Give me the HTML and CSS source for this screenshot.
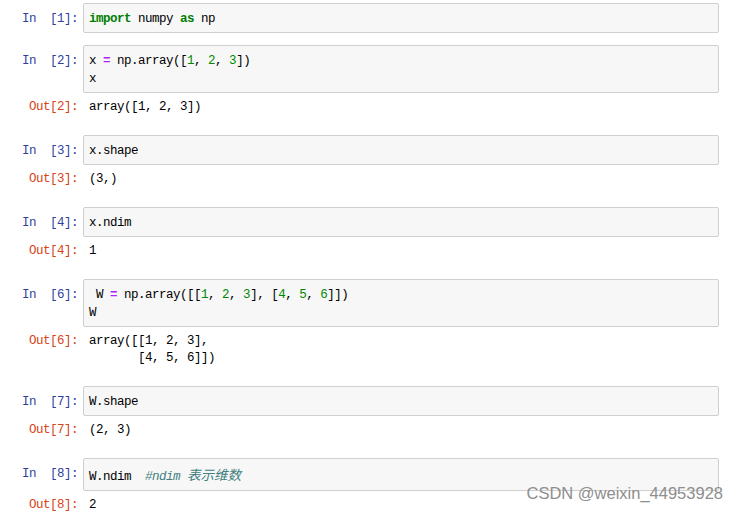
FILE: index.html
```html
<!DOCTYPE html>
<html>
<head>
<meta charset="utf-8">
<link rel="stylesheet" href="styles.css">
</head>
<body>
<div class="notebook">
  <div class="cell">
    <div class="row">
      <div class="prompt in-p">In&nbsp;&nbsp;[1]:</div>
      <div class="input"><pre class="code"><span class="kw">import</span> numpy <span class="kw">as</span> np</pre></div>
    </div>
  </div>

  <div class="cell">
    <div class="row">
      <div class="prompt in-p">In&nbsp;&nbsp;[2]:</div>
      <div class="input"><pre class="code">x <span class="op">=</span> np.array([<span class="num">1</span>, <span class="num">2</span>, <span class="num">3</span>])
x</pre></div>
    </div>
    <div class="row out-row">
      <div class="prompt out-p">Out[2]:</div>
      <pre class="code output">array([1, 2, 3])</pre>
    </div>
  </div>

  <div class="cell">
    <div class="row">
      <div class="prompt in-p">In&nbsp;&nbsp;[3]:</div>
      <div class="input"><pre class="code">x.shape</pre></div>
    </div>
    <div class="row out-row">
      <div class="prompt out-p">Out[3]:</div>
      <pre class="code output">(3,)</pre>
    </div>
  </div>

  <div class="cell">
    <div class="row">
      <div class="prompt in-p">In&nbsp;&nbsp;[4]:</div>
      <div class="input"><pre class="code">x.ndim</pre></div>
    </div>
    <div class="row out-row">
      <div class="prompt out-p">Out[4]:</div>
      <pre class="code output">1</pre>
    </div>
  </div>

  <div class="cell">
    <div class="row">
      <div class="prompt in-p">In&nbsp;&nbsp;[6]:</div>
      <div class="input"><pre class="code"> W <span class="op">=</span> np.array([[<span class="num">1</span>, <span class="num">2</span>, <span class="num">3</span>], [<span class="num">4</span>, <span class="num">5</span>, <span class="num">6</span>]])
W</pre></div>
    </div>
    <div class="row out-row">
      <div class="prompt out-p">Out[6]:</div>
      <pre class="code output">array([[1, 2, 3],
       [4, 5, 6]])</pre>
    </div>
  </div>

  <div class="cell">
    <div class="row">
      <div class="prompt in-p">In&nbsp;&nbsp;[7]:</div>
      <div class="input"><pre class="code">W.shape</pre></div>
    </div>
    <div class="row out-row">
      <div class="prompt out-p">Out[7]:</div>
      <pre class="code output">(2, 3)</pre>
    </div>
  </div>

  <div class="cell">
    <div class="row">
      <div class="prompt in-p">In&nbsp;&nbsp;[8]:</div>
      <div class="input"><pre class="code">W.ndim  <span class="cm">#ndim <span class="cjk">表示维数</span></span></pre></div>
    </div>
    <div class="row out-row">
      <div class="prompt out-p">Out[8]:</div>
      <pre class="code output">2</pre>
    </div>
  </div>
</div>
<div class="watermark">CSDN @weixin_44953928</div>
</body>
</html>
```

FILE: styles.css
```css
html, body {
  margin: 0;
  padding: 0;
  background: #ffffff;
}
body {
  position: relative;
  width: 738px;
  height: 511px;
  overflow: hidden;
}
.notebook {
  padding: 3px 19px 0 0;
}
.cell {
  margin-bottom: 12px;
}
.row {
  display: flex;
  align-items: flex-start;
}
.prompt {
  width: 78px;
  flex: none;
  margin-right: 5px;
  text-align: right;
  font-family: "Liberation Mono", monospace;
  font-size: 12.5px;
  letter-spacing: -0.5px;
  line-height: 18px;
  white-space: nowrap;
}
.in-p {
  color: #303f9f;
  padding-top: 7px;
}
.out-p {
  color: #d84315;
  line-height: 17px;
}
.input {
  flex: 1;
  background: #f7f7f7;
  border: 1px solid #cfcfcf;
  border-radius: 2px;
  padding: 6px 5px 4px 5px;
}
.code {
  margin: 0;
  font-family: "Liberation Mono", monospace;
  font-size: 12.5px;
  letter-spacing: -0.5px;
  line-height: 18px;
  color: #000;
  white-space: pre;
}
.out-row {
  padding: 6px 0 7px 0;
}
.output {
  line-height: 17px;
  padding-left: 6px;
}
.kw {
  color: #008000;
  font-weight: bold;
}
.op {
  color: #aa22ff;
  font-weight: bold;
}
.num {
  color: #008800;
}
.cm {
  color: #408080;
  font-style: italic;
}
.cjk {
  font-family: "Noto Sans CJK SC", sans-serif;
  font-size: 13.5px;
  letter-spacing: 0;
}
.watermark {
  position: absolute;
  right: 15px;
  top: 484px;
  font-family: "Liberation Sans", Arial, sans-serif;
  font-size: 16.5px;
  color: #8e8e8e;
  white-space: nowrap;
}
```
